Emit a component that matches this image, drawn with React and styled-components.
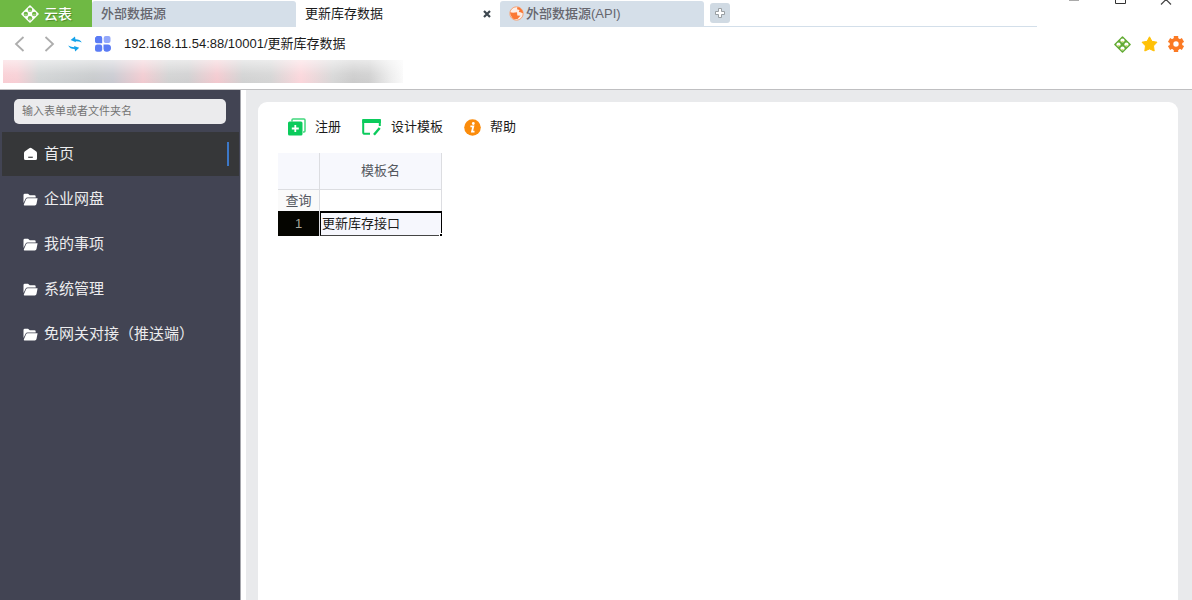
import React from "react";
import styled, { createGlobalStyle } from "styled-components";

const Global = createGlobalStyle`
  *, *::before, *::after { box-sizing: border-box; }
  html, body, #root { height: 100%; }
  body {
    margin: 0;
    background: #fff;
    color: #1b1b1b;
    font: 13px/16px "Liberation Sans", "Noto Sans CJK SC", sans-serif;
    overflow: hidden;
  }
  button, input { font: inherit; color: inherit; }
  button { border: 0; padding: 0; background: none; cursor: pointer; }
  svg { display: block; flex: none; }
`;

const Page = styled.div`
  min-height: 100%;
  display: flex;
  flex-direction: column;
`;

const TitleBar = styled.header`
  display: flex;
  height: 27px;
`;

const Brand = styled.a`
  display: flex;
  align-items: center;
  gap: 5px;
  width: 92px;
  padding-left: 21px;
  background: #6fb944;
  color: #fff;
  font-size: 14px;
  font-weight: 500;
  text-decoration: none;
  text-shadow: 1px 1px 1px #4d8a2b;
`;

const TabStrip = styled.nav`
  flex: 1;
  display: flex;
  align-items: stretch;
  border-bottom: 1px solid #d3dfea;
`;

const Tab = styled.div`
  display: flex;
  align-items: center;
  width: 204px;
  margin-top: 1px;
  margin-bottom: -1px;
  padding: 0 9px 1px;
  border-radius: 3px 3px 0 0;
  background: ${(p) => (p.$active ? "#fff" : "#d5dfe9")};
  color: ${(p) => (p.$active ? "#1b1b1b" : "#66666e")};
  font-weight: ${(p) => (p.$active ? 400 : 500)};
`;

const TabLabel = styled.button`
  flex: 1;
  display: flex;
  align-items: center;
  gap: 2px;
  text-align: left;
  white-space: nowrap;
`;

const TabClose = styled.button`
  display: grid;
  place-items: center;
  width: 8px;
  height: 16px;
`;

const AddTab = styled.button`
  display: grid;
  place-items: center;
  width: 20px;
  height: 20px;
  margin: 3px 0 0 6px;
  border-radius: 3px;
  background: #d0dae3;
`;

const WindowControls = styled.div`
  display: flex;
  align-items: flex-start;
  gap: 28px;
  width: 155px;
  padding-left: 28px;
`;

const WindowButton = styled.button`
  width: 18px;
  height: 8px;
`;

const AddressBar = styled.div`
  display: flex;
  align-items: center;
  height: 34px;
  padding: 0 8px 0 14px;
`;

const IconRow = styled.div`
  display: flex;
  align-items: center;
  gap: ${(p) => p.$gap}px;
`;

const IconButton = styled.button`
  display: grid;
  place-items: center;
`;

const Address = styled.input`
  flex: 1;
  min-width: 0;
  margin-left: 13px;
  padding: 0;
  border: 0;
  outline: 0;
  background: transparent;
`;

const BookmarkBar = styled.div`
  height: 29px;
  padding-left: 3px;
  border-bottom: 1px solid #bfbfc1;
`;

const HiddenBookmarks = styled.div`
  width: 400px;
  height: 23px;
  margin-top: -1px;
  background:
    linear-gradient(#ffffff90, #ffffff20 60%, #ffffff00),
    linear-gradient(90deg, #f9cdd3 0, #f7ced4 14px, #d0d3d4 36px, #c6c9cb 90px,
      #c8c9d0 110px, #f1c9cf 140px, #d0d1d1 166px, #cfcfd0 185px, #f3c8ce 214px, #d0d1d1 240px,
      #d4d4d4 268px, #fbd5da 298px, #d6d6d6 330px, #cbcbcb 350px, #cecece 366px, #ededed 388px, #fafafa);
`;

const Body = styled.div`
  flex: 1;
  display: flex;
`;

const Sidebar = styled.aside`
  flex: none;
  width: 241px;
  padding: 9px 1px 0 2px;
  border-right: 1px solid #a5a6ac;
  background: #424453;
`;

const Search = styled.input`
  display: block;
  width: 212px;
  height: 25px;
  margin: 0 0 8px 12px;
  padding: 0 8px 1px;
  border: 0;
  border-radius: 5px;
  background: #ebebed;
  font-size: 11px;
  &::placeholder { color: #737373; opacity: 1; }
`;

const MenuItem = styled.a`
  display: flex;
  align-items: center;
  gap: 6px;
  height: 44px;
  margin-bottom: 1px;
  padding: 0 10px 0 21px;
  background: ${(p) => (p.$active ? "#363739" : "transparent")};
  color: #ececee;
  font-size: 15px;
  text-decoration: none;
`;

const MenuText = styled.span`
  flex: 1;
`;

const ActiveMark = styled.span`
  width: 2px;
  height: 24px;
  background: #3c78c8;
`;

const Workspace = styled.main`
  flex: 1;
  display: flex;
  margin-left: 5px;
  padding: 12px 14px 0 12px;
  background: #e9eaec;
`;

const Card = styled.section`
  flex: 1;
  padding: 15px 20px;
  border-radius: 9px 9px 0 0;
  background: #fff;
`;

const Toolbar = styled.div`
  display: flex;
  gap: 21px;
  padding-left: 10px;
  margin-bottom: 16px;
`;

const Tool = styled.button`
  display: flex;
  align-items: center;
  gap: 9px;
  height: 20px;
`;

const Grid = styled.table`
  border-collapse: separate;
  border-spacing: 0;
  table-layout: fixed;
  width: 164px;
  color: #55585f;
  th, td { padding: 0; font-weight: 400; border: 0 solid #dcdde1; }
`;

const HeadCell = styled.th`
  width: ${(p) => p.$width}px;
  height: 37px;
  background: #f7f8fd;
  && { border-width: 0 1px 1px 0; }
`;

const QueryLabel = styled.th`
  height: 21px;
  background: #fafafa;
  && { border-right-width: 1px; }
`;

const QueryCell = styled.td`
  && { border-right-width: 1px; }
`;

const RowNumber = styled.th`
  height: 25px;
  background: #050500;
  color: #aaa79a;
  && { border-right: 1px solid #dcdde1; }
`;

const SelectedCell = styled.td`
  position: relative;
  background: #f6f7fd;
  color: #1b1b1b;
  && {
    border: solid #000;
    border-width: 2px 1px 1px 1px;
    border-bottom-color: #444;
    padding-left: 1px;
  }
`;

const FillHandle = styled.span`
  position: absolute;
  right: -1px;
  bottom: -1px;
  width: 3px;
  height: 3px;
  border: solid #fff;
  border-width: 1px 0 0 1px;
  background: #000;
`;

const HOLES = [[9, 4.800], [4.800, 9], [13.200, 9], [9, 13.200]];

const Knot = ({ size, color, hole, accent }) => (
  <svg width={size} height={size} viewBox="0 0 18 18">
    <path d="M9 1 17 9 9 17 1 9Z" fill={color} stroke={color} strokeWidth="1.600" strokeLinejoin="round" />
    {HOLES.map(([x, y]) => (
      <g key={`${x}-${y}`}>
        <circle cx={x} cy={y} r="2.200" fill={hole} />
        <path d={`M${x - 1.800} ${y + 0.600}h3.600a2.200 2.200 0 0 1 -3.600 0z`} fill={accent} />
      </g>
    ))}
  </svg>
);

const Chevron = ({ d }) => (
  <svg width="11" height="16" viewBox="0 0 11 16" fill="none" stroke="#adadad" strokeWidth="1.800">
    <path d={d} />
  </svg>
);

const Refresh = () => (
  <svg width="14" height="16" viewBox="0 0 14 16" fill="#14a2ea">
    <path d="M2.600 4.100 7 .6 7.400 3.300Q12 3.300 13.800 6.600 11 5.100 7.600 5.200L8 6.300Z" />
    <path d="M11.200 11.800 7.200 15.500 6.600 13.100Q2 13.200 .2 9.600 3 11.200 6.400 11.200L6 9.900Z" />
  </svg>
);

const Apps = () => (
  <svg width="16" height="16" viewBox="0 0 16 16" fill="#5b7cf5">
    <path d="M1 1Q1 0 2 0H5.500Q7.200 0 7.200 2V7.200H2Q0 7.200 0 5.500V2Q0 1 1 1Z" />
    <rect x="8.700" y="0" width="6.800" height="7" rx="2" fill="#93a8fa" />
    <rect x="0" y="8.500" width="7.200" height="7.300" rx="2.200" />
    <path d="M8.500 8.500H13Q16 8.700 16 12T12.500 15.800H11Q8.500 15.500 8.500 13Z" />
  </svg>
);

const Star = () => (
  <svg width="17" height="16" viewBox="0 0 17 16">
    <path d="M8.500 .8 10.900 5.300 16 6.200 12.500 9.900 13.200 15 8.500 12.900 3.800 15 4.500 9.900 1 6.200 6.100 5.300Z"
      fill="#ffc107" stroke="#ffc107" strokeLinejoin="round" />
  </svg>
);

const Gear = () => (
  <svg width="16" height="16" viewBox="0 0 16 16">
    <circle cx="8" cy="8" r="4.500" fill="none" stroke="#fb7a24" strokeWidth="3.600" />
    {[0, 60, 120].map((a) => (
      <path key={a} d="M8 0V3.200M8 12.800V16" stroke="#fb7a24" strokeWidth="4.400" transform={`rotate(${a} 8 8)`} />
    ))}
  </svg>
);

const Globe = () => (
  <svg width="15" height="15" viewBox="0 0 15 15">
    <circle cx="7.500" cy="7.500" r="6.700" fill="#fdeee6" stroke="#f5a377" />
    <path d="M1 6.300 4.200 6.800 8 6.200 8.300 9.500 11.500 9.800 8.500 13 5 13.200Q1.500 11 1 6.300Z" fill="#fb7833" />
    <path d="M8.500 1Q13.500 2 14.200 7.500L11.500 6.200 9.800 6 10.500 4 8 3.200Z" fill="#fb7833" />
  </svg>
);

const Home = () => (
  <svg width="15" height="14" viewBox="0 0 15 14">
    <path d="M1 6.200Q1 5 2 4.300L6.300 1.200Q7.500 .4 8.700 1.200L13 4.300Q14 5 14 6.200V11.500Q14 13 12.500 13H2.500Q1 13 1 11.500Z" fill="#fff" />
    <path d="M5.200 10.300H9.800" stroke="#4c4d50" strokeWidth="1.300" />
  </svg>
);

const Folder = () => (
  <svg width="15" height="13" viewBox="0 0 15 13" fill="#fff">
    <path d="M.5 10V2Q.5 .7 1.800 .7H5L6.800 2.300H11.500Q12.700 2.300 12.700 3.500V4.400H4.500Q3.200 4.400 2.700 5.500Z" />
    <path d="M4.600 5.200H14.600L13.500 11Q13.200 12.400 11.800 12.400H1.500Q.7 12.400 .8 11.400L3.200 6.100Q3.600 5.200 4.600 5.200Z" />
  </svg>
);

const Register = () => (
  <svg width="18" height="18" viewBox="0 0 18 18">
    <path d="M4 3.500V2Q4 1 5 1H16Q17 1 17 2V13Q17 14 16 14H15" fill="none" stroke="#40d77c" strokeWidth="1.500" />
    <rect x="0" y="3.500" width="14.500" height="14" rx="1.500" fill="#0bcb5c" />
    <path d="M7.300 7V14M3.800 10.500H10.800" stroke="#fff" strokeWidth="1.800" />
  </svg>
);

const Design = () => (
  <svg width="20" height="18" viewBox="0 0 20 18" fill="none" stroke="#0bcb5c">
    <path d="M8 15.800H3Q1.200 15.800 1.200 14.500V3H17.800V8" strokeWidth="2" />
    <path d="M.3 3H18.800" strokeWidth="4" />
    <path d="M17.700 10 12 16.800" strokeWidth="2.400" />
  </svg>
);

const Info = () => (
  <svg width="17" height="17" viewBox="0 0 17 17">
    <circle cx="8.500" cy="8.500" r="8.300" fill="#fb8c0c" />
    <circle cx="9.300" cy="4.500" r="1.400" fill="#fff" />
    <path d="M6.400 7.400H9.300L8 12.600H10.500" fill="none" stroke="#fff" strokeWidth="1.800" />
  </svg>
);

const MENU = ["企业网盘", "我的事项", "系统管理", "免网关对接（推送端）"];

const TOOLS = [
  { label: "注册", icon: <Register /> },
  { label: "设计模板", icon: <Design /> },
  { label: "帮助", icon: <Info /> },
];

export default function App() {
  return (
    <Page>
      <Global />
      <TitleBar>
        <Brand href="#">
          <Knot size={18} color="#fff" hole="#6fb944" accent="#c5e3b3" />
          云表
        </Brand>
        <TabStrip>
          <Tab><TabLabel>外部数据源</TabLabel></Tab>
          <Tab $active>
            <TabLabel>更新库存数据</TabLabel>
            <TabClose aria-label="关闭标签">
              <svg width="8" height="8" viewBox="0 0 8 8" stroke="#3d474f" strokeWidth="2.200">
                <path d="M1 1 7 7M7 1 1 7" />
              </svg>
            </TabClose>
          </Tab>
          <Tab><TabLabel><Globe />外部数据源(API)</TabLabel></Tab>
          <AddTab aria-label="新建标签">
            <svg width="12" height="12" viewBox="0 0 12 12" fill="#fff" stroke="#999fa3">
              <path d="M4.500 1.500h3v3h3v3h-3v3h-3v-3h-3v-3h3z" />
            </svg>
          </AddTab>
        </TabStrip>
        <WindowControls>
          <WindowButton aria-label="最小化">
            <svg width="18" height="8"><path d="M4 .5h10" stroke="#aaa" /></svg>
          </WindowButton>
          <WindowButton aria-label="最大化">
            <svg width="18" height="8"><path d="M4.500 0V3.500H14.500V0" fill="none" stroke="#333" /></svg>
          </WindowButton>
          <WindowButton aria-label="关闭">
            <svg width="18" height="8"><path d="M4 4.500 9 -.5 14 4.500" fill="none" stroke="#444" strokeWidth="1.200" /></svg>
          </WindowButton>
        </WindowControls>
      </TitleBar>
      <AddressBar>
        <IconRow $gap={13}>
          <IconRow $gap={19}>
            <IconButton aria-label="后退"><Chevron d="M9.500 1 2 8 9.500 15" /></IconButton>
            <IconButton aria-label="前进"><Chevron d="M1.500 1 9 8 1.500 15" /></IconButton>
          </IconRow>
          <IconButton aria-label="刷新"><Refresh /></IconButton>
          <IconButton aria-label="应用"><Apps /></IconButton>
        </IconRow>
        <Address aria-label="地址" defaultValue="192.168.11.54:88/10001/更新库存数据" />
        <IconRow $gap={10}>
          <IconButton aria-label="云表"><Knot size={17} color="#62ab33" hole="#fff" accent="#d3d96a" /></IconButton>
          <IconButton aria-label="收藏"><Star /></IconButton>
          <IconButton aria-label="设置"><Gear /></IconButton>
        </IconRow>
      </AddressBar>
      <BookmarkBar><HiddenBookmarks /></BookmarkBar>
      <Body>
        <Sidebar>
          <Search aria-label="搜索" placeholder="输入表单或者文件夹名" />
          <nav>
            <MenuItem href="#" $active>
              <Home />
              <MenuText>首页</MenuText>
              <ActiveMark />
            </MenuItem>
            {MENU.map((name) => (
              <MenuItem href="#" key={name}>
                <Folder />
                <MenuText>{name}</MenuText>
              </MenuItem>
            ))}
          </nav>
        </Sidebar>
        <Workspace>
          <Card>
            <Toolbar>
              {TOOLS.map((tool) => (
                <Tool key={tool.label}>{tool.icon}{tool.label}</Tool>
              ))}
            </Toolbar>
            <Grid>
              <thead>
                <tr>
                  <HeadCell $width={42} aria-label="序号" />
                  <HeadCell $width={122}>模板名</HeadCell>
                </tr>
              </thead>
              <tbody>
                <tr>
                  <QueryLabel>查询</QueryLabel>
                  <QueryCell />
                </tr>
                <tr>
                  <RowNumber>1</RowNumber>
                  <SelectedCell>更新库存接口<FillHandle /></SelectedCell>
                </tr>
              </tbody>
            </Grid>
          </Card>
        </Workspace>
      </Body>
    </Page>
  );
}
